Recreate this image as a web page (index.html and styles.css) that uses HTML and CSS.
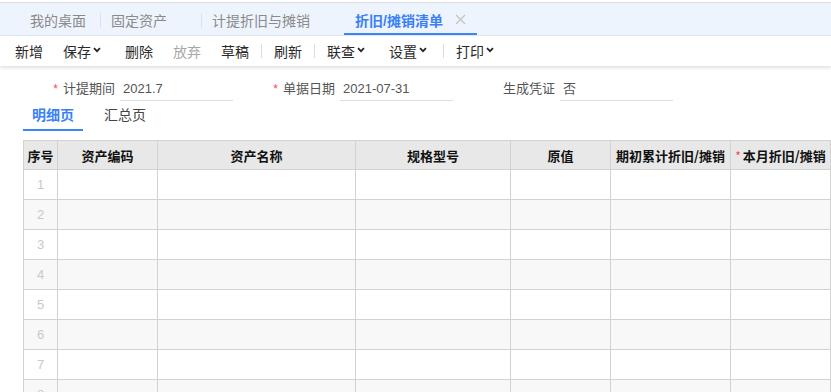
FILE: index.html
```html
<!DOCTYPE html>
<html lang="zh-CN">
<head>
<meta charset="utf-8">
<title>折旧/摊销清单</title>
<link rel="stylesheet" href="styles.css">
</head>
<body>
<div class="tabbar">
  <div class="tab tab-home">我的桌面</div>
  <div class="tab">固定资产<span class="close-space"></span></div>
  <div class="tab">计提折旧与摊销<span class="close-space"></span></div>
  <div class="tab active">折旧/摊销清单<span class="close"><svg width="11" height="11" viewBox="0 0 11 11"><path d="M1 1L10 10M10 1L1 10" stroke="#c4c4c4" stroke-width="1.3" fill="none"/></svg></span></div>
</div>
<div class="toolbar">
  <span class="btn">新增</span>
  <span class="btn">保存<span class="caret"><svg width="8" height="6" viewBox="0 0 8 6"><path d="M1 1.2L4 4.2L7 1.2" stroke="#222" stroke-width="1.7" fill="none"/></svg></span></span>
  <span class="btn">删除</span>
  <span class="btn disabled">放弃</span>
  <span class="btn">草稿</span>
  <span class="sep"></span>
  <span class="btn">刷新</span>
  <span class="sep"></span>
  <span class="btn">联查<span class="caret"><svg width="8" height="6" viewBox="0 0 8 6"><path d="M1 1.2L4 4.2L7 1.2" stroke="#222" stroke-width="1.7" fill="none"/></svg></span></span>
  <span class="btn">设置<span class="caret"><svg width="8" height="6" viewBox="0 0 8 6"><path d="M1 1.2L4 4.2L7 1.2" stroke="#222" stroke-width="1.7" fill="none"/></svg></span></span>
  <span class="sep"></span>
  <span class="btn">打印<span class="caret"><svg width="8" height="6" viewBox="0 0 8 6"><path d="M1 1.2L4 4.2L7 1.2" stroke="#222" stroke-width="1.7" fill="none"/></svg></span></span>
</div>
<div class="form">
  <div class="field">
    <label class="label"><span class="req">*</span>计提期间</label>
    <div class="value">2021.7</div>
  </div>
  <div class="field">
    <label class="label"><span class="req">*</span>单据日期</label>
    <div class="value">2021-07-31</div>
  </div>
  <div class="field">
    <label class="label">生成凭证</label>
    <div class="value">否</div>
  </div>
</div>
<div class="subtabs">
  <div class="subtab active">明细页</div>
  <div class="subtab">汇总页</div>
</div>
<div class="grid">
  <div class="th">序号</div>
  <div class="th">资产编码</div>
  <div class="th">资产名称</div>
  <div class="th">规格型号</div>
  <div class="th">原值</div>
  <div class="th">期初累计折旧/摊销</div>
  <div class="th"><span class="req">*</span>本月折旧/摊销</div>

  <div class="td num">1</div><div class="td"></div><div class="td"></div><div class="td"></div><div class="td"></div><div class="td"></div><div class="td"></div>
  <div class="td num even">2</div><div class="td even"></div><div class="td even"></div><div class="td even"></div><div class="td even"></div><div class="td even"></div><div class="td even"></div>
  <div class="td num">3</div><div class="td"></div><div class="td"></div><div class="td"></div><div class="td"></div><div class="td"></div><div class="td"></div>
  <div class="td num even">4</div><div class="td even"></div><div class="td even"></div><div class="td even"></div><div class="td even"></div><div class="td even"></div><div class="td even"></div>
  <div class="td num">5</div><div class="td"></div><div class="td"></div><div class="td"></div><div class="td"></div><div class="td"></div><div class="td"></div>
  <div class="td num even">6</div><div class="td even"></div><div class="td even"></div><div class="td even"></div><div class="td even"></div><div class="td even"></div><div class="td even"></div>
  <div class="td num">7</div><div class="td"></div><div class="td"></div><div class="td"></div><div class="td"></div><div class="td"></div><div class="td"></div>
  <div class="td num even">8</div><div class="td even"></div><div class="td even"></div><div class="td even"></div><div class="td even"></div><div class="td even"></div><div class="td even"></div>
</div>
</body>
</html>
```
FILE: styles.css
```css
* { box-sizing: border-box; }
html, body {
  margin: 0;
  padding: 0;
  background: #fff;
  overflow: hidden;
}
body {
  font-family: "Liberation Sans", "Noto Sans CJK SC", sans-serif;
  color: #333;
  width: 831px;
  height: 392px;
  padding-top: 2px;
}

/* top tab bar */
.tabbar {
  display: flex;
  align-items: stretch;
  height: 34px;
  background: #eef4fd;
  border-top: 1px solid #dedede;
  border-bottom: 1px solid #e1e7ef;
  font-size: 14px;
  padding-left: 19px;
}
.tab {
  position: relative;
  display: flex;
  align-items: center;
  padding: 3px 11px 0 11px;
  color: #8a8a8a;
  border-bottom: 2px solid transparent;
  white-space: nowrap;
}
.tab-home { padding-right: 14px; }
.tab + .tab::before {
  content: "";
  position: absolute;
  left: 0;
  top: 10px;
  height: 15px;
  width: 1px;
  background: #dde2ea;
}
.tab.active {
  color: #3a80f5;
  font-weight: 600;
  border-bottom-color: #3a86f8;
}
.tab.active::before { display: none; }
.close-space { display: inline-block; width: 11px; margin-left: 12px; }
.close { display: inline-flex; width: 11px; margin-left: 12px; }

/* toolbar */
.toolbar {
  display: flex;
  align-items: center;
  height: 30px;
  padding-left: 5px;
  font-size: 14px;
  color: #2a2a2a;
  background: #fff;
  box-shadow: 0 2px 3px rgba(0, 0, 0, 0.12);
}
.btn {
  display: inline-flex;
  align-items: center;
  padding: 0 10px;
  white-space: nowrap;
}
.btn.disabled { color: #a8a8a8; }
.caret {
  display: inline-flex;
  width: 12px;
  margin-left: 2px;
  padding-bottom: 2px;
}
.sep {
  width: 1px;
  height: 14px;
  margin: 0 2px;
  background: #dcdcdc;
}

/* form */
.form {
  display: flex;
  margin-top: 11px;
  padding-left: 13px;
  font-size: 13px;
}
.field { display: flex; }
.label {
  width: 107px;
  padding-right: 5px;
  text-align: right;
  color: #555;
  line-height: 23px;
}
.req {
  color: #f5485a;
  margin-right: 5px;
  font-size: 12px;
}
.value {
  width: 113px;
  height: 24px;
  line-height: 23px;
  padding-left: 3px;
  color: #555;
  border-bottom: 1px solid #dddddd;
}

/* sub tabs */
.subtabs {
  display: flex;
  gap: 12px;
  padding-left: 23px;
  font-size: 14px;
}
.subtab {
  height: 30px;
  line-height: 28px;
  padding: 0 9px;
  color: #444;
  border-bottom: 2px solid transparent;
}
.subtab.active {
  color: #3a80f5;
  font-weight: 600;
  border-bottom-color: #3a86f8;
}

/* table */
.grid {
  display: grid;
  grid-template-columns: 34px 100px 198px 155px 100px 120px 100px;
  grid-auto-rows: 30px;
  grid-template-rows: 29px;
  margin-top: 9px;
  margin-left: 23px;
  width: 808px;
  border-top: 1px solid #d2d2d2;
  border-left: 1px solid #d2d2d2;
}
.th, .td {
  border-right: 1px solid #d2d2d2;
  border-bottom: 1px solid #d2d2d2;
}
.th {
  background: #e8e8e8;
  font-size: 13px;
  font-weight: 700;
  color: #111;
  display: flex;
  align-items: center;
  justify-content: center;
  white-space: nowrap;
  font-family: "Noto Sans CJK SC", sans-serif;
}
.th .req { margin-right: 2px; font-weight: 400; }
.td { background: #fff; }
.td.even { background: #f8f8f8; }
.td.num {
  color: #c8c8c8;
  font-size: 13px;
  display: flex;
  align-items: center;
  justify-content: center;
}
```
